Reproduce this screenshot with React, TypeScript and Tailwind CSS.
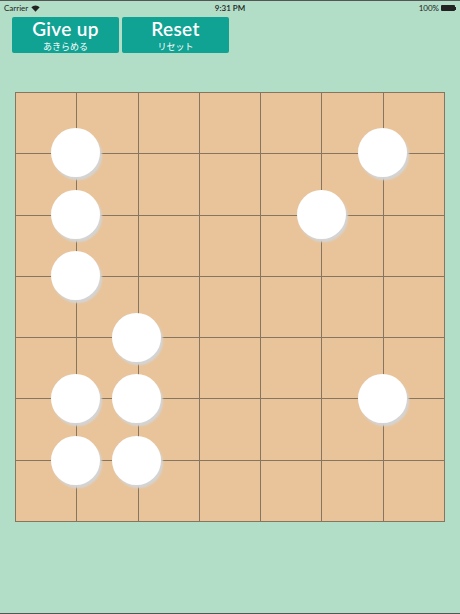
import React from 'react';

const stones: [number, number][] = [
  [1, 1], [6, 1],
  [1, 2], [5, 2],
  [1, 3],
  [2, 4],
  [1, 5], [2, 5], [6, 5],
  [1, 6], [2, 6],
];

const CELL = 61.43;

function StatusBar() {
  return (
    <div className="relative flex h-[14px] items-center justify-between px-[4px] text-[8px] text-[#222]">
      <div className="flex items-center gap-[3px]">
        <span>Carrier</span>
        <svg width="9" height="7" viewBox="0 0 9 7">
          <path d="M4.5 6.8 L0.3 2.2 A6 6 0 0 1 8.7 2.2 Z" fill="#222" />
        </svg>
      </div>
      <span className="absolute left-1/2 -translate-x-1/2 font-semibold">9:31 PM</span>
      <div className="flex items-center gap-[2px]">
        <span>100%</span>
        <div className="flex items-center">
          <div className="h-[6px] w-[14px] rounded-[1px] bg-[#222]" />
          <div className="h-[3px] w-[1px] bg-[#222]" />
        </div>
      </div>
    </div>
  );
}

function Btn({ en, jp }: { en: string; jp: string }) {
  return (
    <button className="flex h-[36px] w-[107px] flex-col items-center justify-center rounded-[2px] bg-[#10a293] text-white">
      <span className="text-[19px] font-semibold leading-[22px] tracking-[0.3px]">{en}</span>
      <span className="text-[9px] leading-[13px]" style={{ fontFamily: '"Noto Sans CJK JP", sans-serif' }}>{jp}</span>
    </button>
  );
}

export default function App() {
  return (
    <div
      className="flex h-[614px] w-[460px] flex-col border-y border-[#555] bg-[#b2ddc7]"
      style={{ fontFamily: '"Lato", "Noto Sans CJK JP", sans-serif' }}
    >
      <StatusBar />
      <div className="ml-[12px] mt-[2px] flex gap-[3px]">
        <Btn en="Give up" jp="あきらめる" />
        <Btn en="Reset" jp="リセット" />
      </div>
      <div className="relative ml-[15px] mt-[39px] h-[430px] w-[430px]">
        <div className="grid h-full w-full grid-cols-7 grid-rows-7 border-l border-t border-[#86765f] bg-[#e9c49a]">
          {Array.from({ length: 49 }).map((_, i) => (
            <div key={i} className="border-b border-r border-[#86765f]" />
          ))}
        </div>
        {stones.map(([cx, cy], i) => (
          <div
            key={i}
            className="absolute h-[49px] w-[49px] rounded-full bg-white shadow-[2px_3px_2px_#d4d4d4]"
            style={{ left: cx * CELL - 25.5, top: cy * CELL - 25 }}
          />
        ))}
      </div>
    </div>
  );
}
